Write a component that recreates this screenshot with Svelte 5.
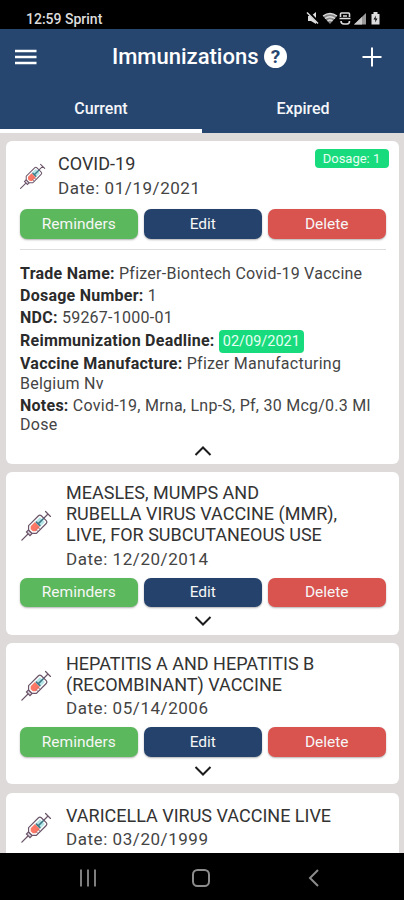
<script>
  let activeTab = $state('current');

  let items = $state([
    {
      name: ['COVID-19'],
      date: '01/19/2021',
      dosage: 1,
      open: true,
      details: [
        { label: 'Trade Name', value: 'Pfizer-Biontech Covid-19 Vaccine' },
        { label: 'Dosage Number', value: '1' },
        { label: 'NDC', value: '59267-1000-01' },
        { label: 'Reimmunization Deadline', value: '02/09/2021', badge: true },
        { label: 'Vaccine Manufacture', value: 'Pfizer Manufacturing Belgium Nv' },
        { label: 'Notes', value: 'Covid-19, Mrna, Lnp-S, Pf, 30 Mcg/0.3 Ml Dose' },
      ],
    },
    {
      name: ['MEASLES, MUMPS AND', 'RUBELLA VIRUS VACCINE (MMR),', 'LIVE, FOR SUBCUTANEOUS USE'],
      date: '12/20/2014',
      open: false,
    },
    {
      name: ['HEPATITIS A AND HEPATITIS B', '(RECOMBINANT) VACCINE'],
      date: '05/14/2006',
      open: false,
    },
    { name: ['VARICELLA VIRUS VACCINE LIVE'], date: '03/20/1999', open: false },
  ]);
</script>

{#snippet syringe()}
  <svg class="syringe" viewBox="0 0 32 32" fill="none" stroke="#6b5468" stroke-width="1.2" stroke-linecap="round">
    <g transform="rotate(45 16 16)">
      <path d="M16 27V36" stroke-width="1.3" />
      <path d="M13.5 24h5v3h-5z" fill="#d9d3dc" />
      <path d="M10.5 7q0-2 2-2h7q2 0 2 2v14l-3 3h-5l-3-3z" fill="#fff" />
      <path d="M12.5 7h7v6h-7z" fill="#b5e6e8" stroke="none" />
      <path d="M12.500 14h7v6l-2 2h-3l-2-2z" fill="#fb7765" stroke="none" />
      <path d="M16 5v8M13.5 13h5" stroke="#3c7886" stroke-width="1.6" />
      <path d="M16 5V-1M12.5-1h7" />
      <path d="M19 15.500h2M19 18.500h2" stroke-width=".8" />
    </g>
  </svg>
{/snippet}

<div class="phone">
  <div class="status">
    <span>12:59 Sprint</span>
    <svg width="76" height="16" viewBox="0 0 76 16" fill="#ddd">
      <path d="M2 5h3l5-4v12L5 10H2z" />
      <path d="M2 1l11 11" stroke="#000" stroke-width="3" />
      <path d="M1 1.500L12 12.500" stroke="#ddd" stroke-width="1.5" />
      <path d="M17 5Q24 0 31 5L24 13z" fill="#888" />
      <path d="M17 5Q24 0 31 5M19 7.5q5-3.500 10 0M21.5 10q2.500-2 5 0" fill="none" stroke="#ddd" stroke-width="1.3" />
      <path d="M34.5 6V3q0-1 1-1h7q1 0 1 1v3M33.5 7.5h11M35 10q0 3 3 3h3q2.500 0 2.500-3M37 5h4" fill="none" stroke="#ddd" stroke-width="1.6" />
      <path d="M48 13.5L60 2v11.500z" fill="#999" />
      <path d="M48 13.5L56 6v7.500z" fill="#ccc" />
      <path d="M67.5 1h4v2h2v10.500h-8V3h2z" />
      <path d="M70 4.500L67.500 8.500h2l-.5 3 2.500-4h-2z" fill="#000" />
    </svg>
  </div>

  <header>
    <div class="bar">
      <svg width="22" height="16" viewBox="0 0 22 16" stroke="#fff" stroke-width="2.4">
        <path d="M0 2h21.500M0 8h21.500M0 14h21.500" />
      </svg>
      <h1>Immunizations <span class="help">?</span></h1>
      <svg width="20" height="20" viewBox="0 0 20 20" stroke="#fff" stroke-width="2">
        <path d="M10 .5v19M.5 10h19" />
      </svg>
    </div>
    <nav class="tabs">
      <button class:active={activeTab === 'current'} onclick={() => (activeTab = 'current')}>Current</button>
      <button class:active={activeTab === 'expired'} onclick={() => (activeTab = 'expired')}>Expired</button>
    </nav>
  </header>

  <main>
    {#each items as item}
      <article class="card" class:open={item.open}>
        <div class="head">
          {@render syringe()}
          <div>
            <h2>
              {#each item.name as line}<span>{line}</span>{/each}
            </h2>
            <p class="date">Date: {item.date}</p>
          </div>
          {#if item.dosage}
            <span class="dosage">Dosage: {item.dosage}</span>
          {/if}
        </div>

        <div class="actions">
          <button class="green">Reminders</button>
          <button class="navy">Edit</button>
          <button class="red">Delete</button>
        </div>

        {#if item.open && item.details}
          <div class="details">
            {#each item.details as d}
              <p><b>{d.label}:</b> <span class:badge={d.badge}>{d.value}</span></p>
            {/each}
          </div>
        {/if}

        <button class="toggle" aria-label="Toggle details" onclick={() => (item.open = !item.open)}>
          <svg width="18" height="10" viewBox="0 0 18 10" fill="none" stroke="#1c1c1e" stroke-width="2">
            <path d={item.open ? 'M1.5 9L9 1.5L16.5 9' : 'M1.5 1L9 8.5L16.5 1'} />
          </svg>
        </button>
      </article>
    {/each}
  </main>

  <footer>
    <svg width="18" height="18" viewBox="0 0 18 18" stroke="#8c8c8c" stroke-width="1.8">
      <path d="M2 .5v17M9 .5v17M16 .5v17" />
    </svg>
    <svg width="18" height="18" viewBox="0 0 18 18" fill="none" stroke="#8c8c8c" stroke-width="2">
      <rect x="1" y="1" width="16" height="16" rx="4.5" />
    </svg>
    <svg width="18" height="18" viewBox="0 0 18 18" fill="none" stroke="#8c8c8c" stroke-width="2">
      <path d="M13 1L5 9l8 8" />
    </svg>
  </footer>
</div>

<style>
  :global(body) {
    margin: 0;
  }
  .phone {
    display: flex;
    flex-direction: column;
    width: 404px;
    height: 900px;
    overflow: hidden;
    background: #dedad9;
    color: #444;
    font-family: Roboto, sans-serif;
  }
  button {
    border: 0;
    padding: 0;
    font-family: inherit;
    cursor: pointer;
  }
  h1,
  h2,
  p {
    margin: 0;
    font-weight: 400;
  }
  svg {
    display: block;
    flex: none;
  }

  .status {
    display: flex;
    justify-content: space-between;
    box-sizing: border-box;
    height: 29px;
    padding: 11px 22px 0 26px;
    background: #000;
    color: #ddd;
    font-size: 14px;
    font-weight: 500;
    line-height: 17px;
  }

  header {
    height: 104px;
    background: #26466f;
    color: #fff;
  }
  .bar {
    display: flex;
    align-items: center;
    justify-content: space-between;
    height: 55px;
    padding: 0 22px 0 15px;
  }
  h1 {
    display: flex;
    align-items: center;
    gap: 5.5px;
    font-size: 22px;
    font-weight: 500;
  }
  .help {
    width: 23px;
    height: 23px;
    border-radius: 50%;
    background: #fff;
    color: #26466f;
    font-size: 19px;
    font-weight: 700;
    line-height: 23px;
    text-align: center;
  }
  .tabs {
    display: flex;
    height: 49px;
  }
  .tabs button {
    flex: 1;
    box-sizing: border-box;
    padding: 4px 0 0;
    border-bottom: 4px solid transparent;
    background: none;
    color: #f4f6fa;
    font-size: 16px;
    font-weight: 500;
  }
  .tabs .active {
    border-color: #fff;
  }

  main {
    flex: 1;
    min-height: 0;
    overflow: hidden;
    padding: 8px 5px 0 6px;
  }
  .card {
    margin-bottom: 8.2px;
    padding: 10px 13.5px 0 14px;
    border-radius: 6px;
    background: #fff;
  }
  .head {
    display: flex;
    align-items: center;
    position: relative;
    min-height: 50px;
  }
  .syringe {
    width: 32px;
    height: 32px;
    margin-right: 14px;
    overflow: visible;
  }
  .open .syringe {
    width: 27px;
    height: 27px;
    margin: 0 12px 0 -1px;
  }
  h2 {
    color: #333;
    font-size: 18px;
    line-height: 21.3px;
  }
  h2 span {
    display: block;
    white-space: nowrap;
  }
  .date {
    margin-top: 2px;
    font-size: 17px;
    line-height: 22px;
    letter-spacing: 0.55px;
  }
  .dosage {
    position: absolute;
    top: -2px;
    right: -3px;
    width: 74px;
    height: 19px;
    border-radius: 4px;
    background: #18db7d;
    color: #e8fff3;
    font-size: 13px;
    line-height: 19px;
    text-align: center;
  }

  .actions {
    display: grid;
    grid-template-columns: repeat(3, 1fr);
    gap: 6.5px;
    margin-top: 8px;
  }
  .actions button {
    height: 29.5px;
    border-radius: 7px;
    box-shadow: 0 1px 2px rgba(0, 0, 0, 0.3);
    color: #f6f6f6;
    font-size: 15.5px;
  }
  .green {
    background: #5cb85c;
  }
  .navy {
    background: #24426b;
  }
  .red {
    background: #d9534f;
  }

  .details {
    margin-top: 10.5px;
    padding-top: 14px;
    border-top: 1px solid #ddd;
    font-size: 16px;
    line-height: 19.5px;
    letter-spacing: 0.25px;
  }
  .details p {
    margin-bottom: 2.7px;
  }
  b {
    color: #2b2b2b;
    font-weight: 700;
  }
  .badge {
    display: inline-block;
    height: 23px;
    margin: -1px 0;
    padding: 0 4px;
    border-radius: 4px;
    background: #18db7d;
    color: #e8fff3;
    font-size: 14.5px;
    line-height: 23px;
    letter-spacing: 0;
  }

  .toggle {
    display: flex;
    align-items: center;
    justify-content: center;
    width: 100%;
    height: 27.5px;
    background: none;
  }
  .open .toggle {
    height: 26px;
  }

  footer {
    display: flex;
    justify-content: space-between;
    align-items: center;
    height: 47px;
    box-sizing: border-box;
    padding: 2px 81px 0 79px;
    background: #000;
  }
</style>
